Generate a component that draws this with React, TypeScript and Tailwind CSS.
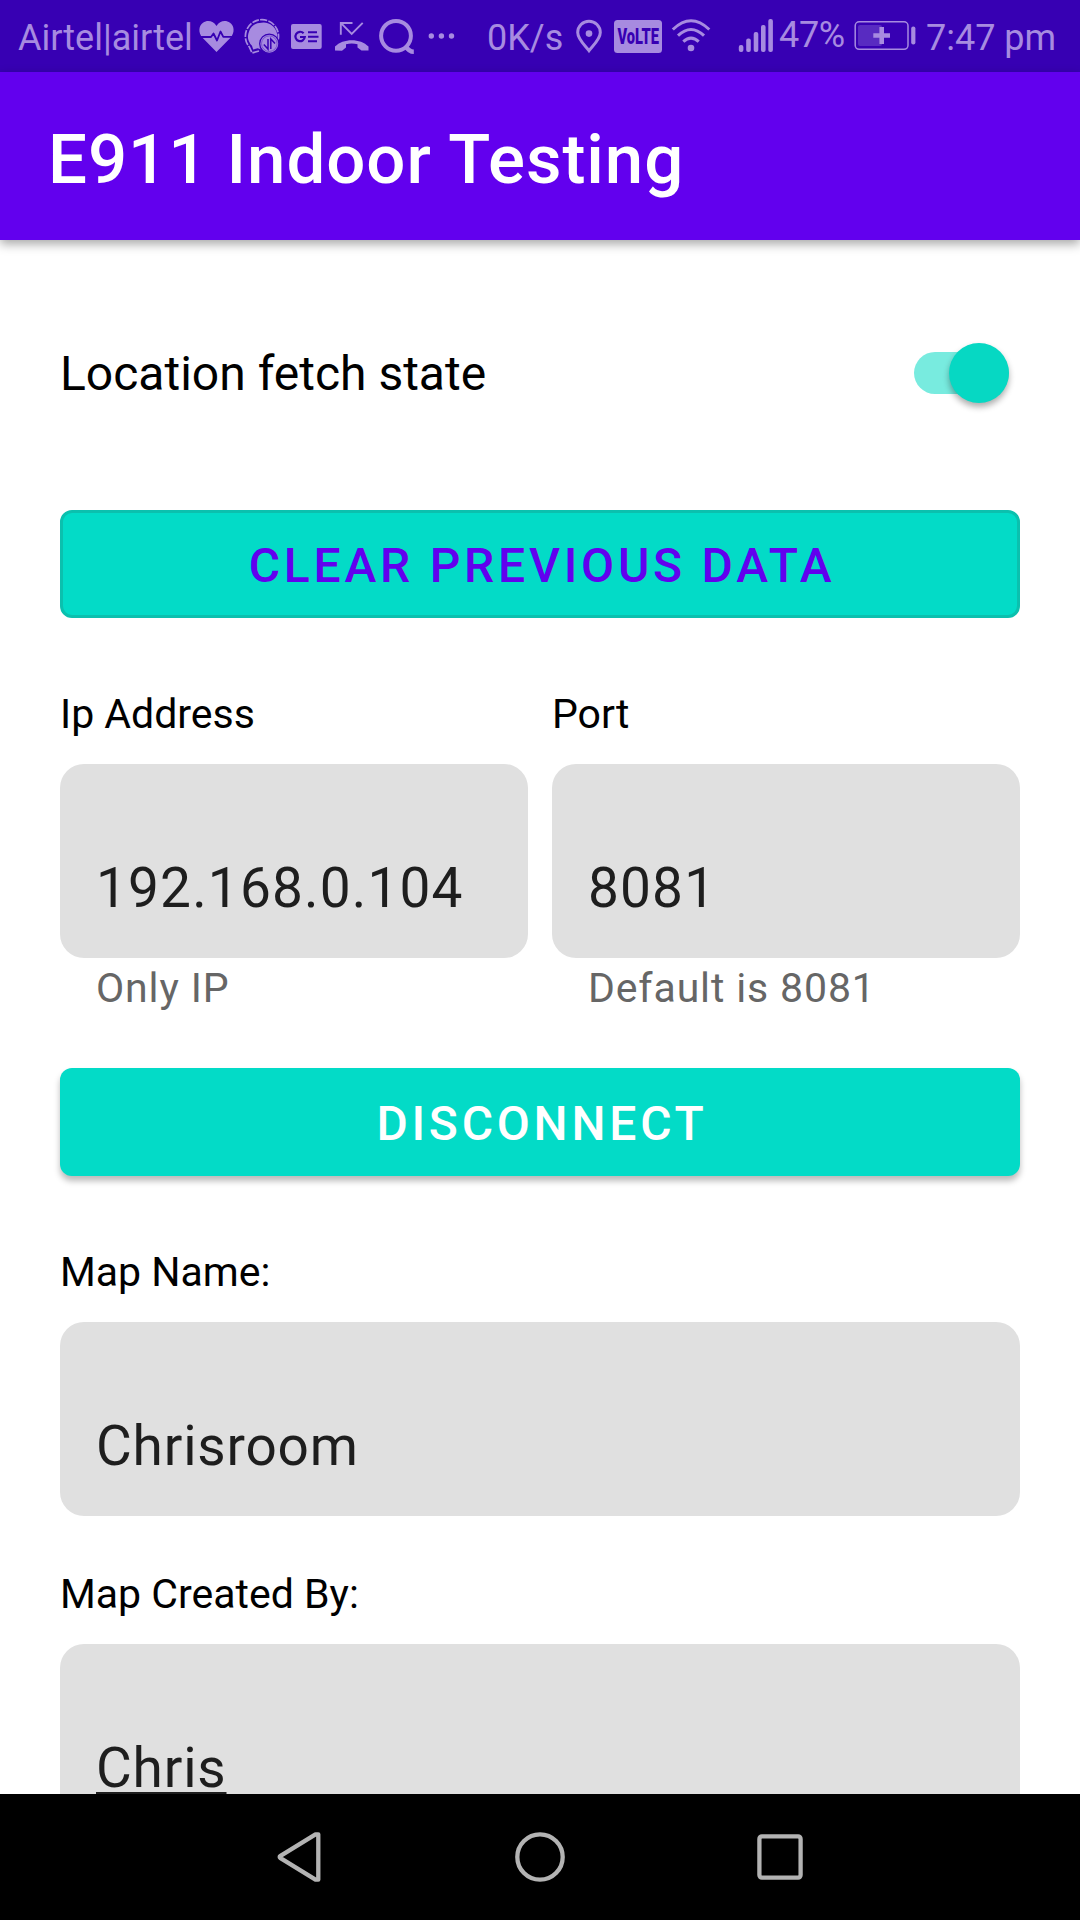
import React from "react";

const tint = "#a78be0";

function HeartIcon() {
  return (
    <svg viewBox="195 0 42 72" className="h-[72px] w-[42px] shrink-0">
      <path
        d="M216.5 52 L202.5 37.7 C197.8 32.5 198.8 25.5 203 22.7 C208 19.5 213.5 21.4 216.5 26 C219.500 21.400 225 19.500 230 22.700 C234.200 25.500 235.200 32.500 230.500 37.700 Z"
        fill={tint}
      />
      <path
        d="M199 37 H211 L213.500 33.500 L217 40.500 L220.500 31.500 L223.300 36.800 H234"
        fill="none"
        stroke="#3700b3"
        strokeWidth="1.8"
        strokeLinejoin="round"
      />
    </svg>
  );
}

function ChatIcon() {
  return (
    <svg viewBox="237 0 48 72" className="h-[72px] w-[48px] shrink-0" fill="none">
      <path
        d="M278 40.500 A16.600 16.600 0 1 0 249.300 47 L252 53 L259 51"
        stroke={tint}
        strokeWidth="1.7"
        strokeDasharray="7 1.300"
      />
      <path
        d="M261.500 22.800 a13.500 13.500 0 0 0 -9.500 23 l1.200 3.600 4.500 -1.200 a13.500 13.500 0 1 0 3.800 -25.400"
        fill={tint}
      />
      <circle cx="269.300" cy="43.700" r="9.600" fill={tint} stroke="#3700b3" strokeWidth="1.300" />
      <circle cx="269.300" cy="43.700" r="7.800" stroke="#5d30c2" strokeWidth="0.600" />
      <path d="M263.800 44.500 L268 49 V39 M270.800 49 V39 L275 43.500" stroke="#3700b3" strokeWidth="1.500" />
    </svg>
  );
}

function NewsIcon() {
  return (
    <svg viewBox="285 0 45 72" className="h-[72px] w-[45px] shrink-0">
      <rect x="291" y="24" width="30.700" height="25" rx="2" fill={tint} />
      <path
        d="M303.600 33.300 A4.700 4.700 0 1 0 304.800 37 H300"
        fill="none"
        stroke="#3700b3"
        strokeWidth="2.200"
      />
      <path d="M308 32.200 H317 M308 36.700 H318.500 M308 41.200 H317" stroke="#3700b3" strokeWidth="2" />
    </svg>
  );
}

function MissedCallIcon() {
  return (
    <svg viewBox="330 0 42 72" className="h-[72px] w-[42px] shrink-0">
      <path d="M352.500 23 H340.800 V34.700 M341 23.200 L351.700 34 L362.700 22.800" fill="none" stroke={tint} strokeWidth="1.900" />
      <path
        d="M335 50.500 V46.500 C343 38 360.500 38 368.500 46.500 V50.500 H361.500 L357.500 47.500 V44.300 C354 43.300 349.500 43.300 346 44.300 V47.500 L342 50.800 Z"
        fill={tint}
      />
    </svg>
  );
}

function SearchIcon() {
  return (
    <svg viewBox="372 0 48 72" className="h-[72px] w-[48px] shrink-0" fill="none" stroke={tint}>
      <circle cx="396" cy="35.800" r="14.900" strokeWidth="4" />
      <path d="M405.500 46 Q409 51.800 413.800 51.800" strokeWidth="4.500" />
    </svg>
  );
}

function DotsIcon() {
  return (
    <svg viewBox="420 0 66 72" className="h-[72px] w-[66px] shrink-0" fill={tint}>
      <circle cx="431.300" cy="36" r="2.700" />
      <circle cx="441.400" cy="36" r="2.700" />
      <circle cx="451.500" cy="36" r="2.700" />
    </svg>
  );
}

function PinIcon() {
  return (
    <svg viewBox="570 0 40 72" className="h-[72px] w-[40px] shrink-0">
      <path
        d="M589 50.700 C586 46.500 577.700 39.500 577.700 32.500 A11.300 11.300 0 0 1 600.300 32.500 C600.300 39.500 592 46.500 589 50.700 Z"
        fill="none"
        stroke={tint}
        strokeWidth="3"
      />
      <circle cx="589" cy="33.600" r="3.300" fill={tint} />
    </svg>
  );
}

function VolteIcon() {
  return (
    <svg viewBox="610 0 58 72" className="h-[72px] w-[58px] shrink-0">
      <rect x="614" y="20" width="48" height="33" rx="3.500" fill={tint} />
      <text
        x="617.500"
        y="44"
        textLength="41.500"
        lengthAdjust="spacingAndGlyphs"
        fontFamily="Roboto"
        fontWeight="900"
        fontSize="21.500"
        fill="#3700b3"
      >
        VoLTE
      </text>
    </svg>
  );
}

function WifiIcon() {
  return (
    <svg viewBox="668 0 64 72" className="h-[72px] w-[64px] shrink-0" fill="none" stroke={tint} strokeWidth="3">
      <path d="M672.800 29.500 Q691 12 709.300 29.500" />
      <path d="M678 35.700 Q691 23.300 704 35.700" />
      <path d="M683.300 41.700 Q691 34.500 698.700 41.700" />
      <circle cx="691" cy="48" r="3.300" fill={tint} stroke="none" />
    </svg>
  );
}

function SignalIcon() {
  return (
    <svg viewBox="732 0 46 72" className="h-[72px] w-[46px] shrink-0" fill={tint}>
      <rect x="738.800" y="45" width="4.600" height="7" rx="2" />
      <rect x="746.200" y="38.500" width="4.600" height="13.500" rx="2" />
      <rect x="753.700" y="32" width="4.600" height="20" rx="2" />
      <rect x="761" y="25" width="4.600" height="27" rx="2" />
      <rect x="768.300" y="19" width="4.600" height="33" rx="2" />
    </svg>
  );
}

function BatteryIcon() {
  return (
    <svg viewBox="848 0 76 72" className="h-[72px] w-[76px] shrink-0">
      <rect x="855.200" y="21.800" width="52.800" height="27.500" rx="4" fill="none" stroke={tint} strokeWidth="1.500" />
      <rect x="858" y="25" width="24" height="21" rx="2" fill="#582bc1" />
      <path d="M873.300 35.500 H890 M881.700 27 V44" stroke={tint} strokeWidth="4.600" />
      <rect x="911.200" y="26.500" width="4.200" height="18" rx="2" fill={tint} />
    </svg>
  );
}

function StatusBar() {
  return (
    <div className="flex h-[72px] shrink-0 items-center bg-[#3700b3] text-[36px] leading-[44px] whitespace-nowrap text-[#a78be0]">
      <span className="w-[195px] shrink-0 pt-[3px] pl-[18px]">Airtel|airtel</span>
      <HeartIcon />
      <ChatIcon />
      <NewsIcon />
      <MissedCallIcon />
      <SearchIcon />
      <DotsIcon />
      <span className="w-[84px] shrink-0 pt-[3px] pl-[1px]">0K/s</span>
      <PinIcon />
      <VolteIcon />
      <WifiIcon />
      <SignalIcon />
      <span className="w-[70px] shrink-0 pb-[3px] pl-[1px] tracking-[-0.3px]">47%</span>
      <BatteryIcon />
      <span className="pt-[3px] pl-[2px]">7:47 pm</span>
    </div>
  );
}

function Label({ children }: { children: React.ReactNode }) {
  return <div className="h-[48px] text-[41px] leading-[48px] text-black">{children}</div>;
}

function Field({ value, numeric, underlined }: { value: string; numeric?: boolean; underlined?: boolean }) {
  return (
    <div
      className={`mt-[26px] h-[194px] rounded-[24px] bg-[#e0e0e0] pt-[92px] pl-[36px] text-[55px] leading-[64px] text-[#1e1e1e] ${
        numeric ? "tracking-[1.15px]" : "tracking-[0.8px]"
      }`}
    >
      <span className={underlined ? "underline decoration-[3px] underline-offset-[5px] [text-decoration-skip-ink:none]" : ""}>
        {value}
      </span>
    </div>
  );
}

function Helper({ children }: { children: React.ReactNode }) {
  return (
    <div className="mt-[6px] h-[48px] pl-[36px] text-[41px] leading-[48px] tracking-[0.86px] text-[#666666]">
      {children}
    </div>
  );
}

function NavBar() {
  return (
    <div className="flex h-[126px] shrink-0 items-center justify-center gap-[180px] bg-black">
      <svg viewBox="-9 0 60 60" className="size-[60px]" fill="none" stroke="#b3b3b3" strokeWidth="4.3" strokeLinejoin="round">
        <path d="M39.300 7.300 V52.700 L36.500 52.700 L1.500 31.200 Q-0.200 30 1.500 28.800 L36.500 7.300 Z" />
      </svg>
      <svg viewBox="0 0 60 60" className="size-[60px]" fill="none" stroke="#b3b3b3" strokeWidth="4.3">
        <circle cx="30" cy="30" r="22.700" />
      </svg>
      <svg viewBox="0 0 60 60" className="size-[60px]" fill="none" stroke="#b3b3b3" strokeWidth="4.3">
        <rect x="9.400" y="9.400" width="41.200" height="41.200" rx="2.500" />
      </svg>
    </div>
  );
}

export default function App() {
  return (
    <div className="flex h-[1920px] w-[1080px] flex-col overflow-hidden bg-white font-[Roboto,sans-serif]">
      <StatusBar />
      <header className="z-10 flex h-[168px] shrink-0 items-center bg-[#6200ee] pt-[8px] pl-[48px] shadow-[0_4px_10px_rgba(0,0,0,0.35)]">
        <h1 className="text-[69px] leading-[80px] font-medium tracking-[0.95px] text-white">E911 Indoor Testing</h1>
      </header>

      <main className="min-h-0 flex-1 overflow-hidden px-[60px] pt-[102px]">
        <div className="flex h-[62px] items-center justify-between">
          <span className="pt-[2px] text-[48px] leading-[60px] text-black">Location fetch state</span>
          <div className="mr-[11px] flex h-[42px] w-[95px] items-center justify-end rounded-full bg-[#78ebdf]">
            <div className="mb-[1px] size-[60px] shrink-0 rounded-full bg-[#06d8c3] shadow-[0_4px_6px_rgba(0,0,0,0.32)]" />
          </div>
        </div>

        <button className="mt-[106px] flex h-[108px] w-full items-center justify-center rounded-[12px] border-[3px] border-[#0bc0ae] bg-[#03dbc7] pt-[3px] pl-[4px] text-[48px] leading-[56px] font-medium tracking-[3.77px] text-[#6200ee]">
          CLEAR PREVIOUS DATA
        </button>

        <div className="mt-[72px] grid grid-cols-2 gap-[24px]">
          <div>
            <Label>Ip Address</Label>
            <Field value="192.168.0.104" numeric />
            <Helper>Only IP</Helper>
          </div>
          <div>
            <Label>Port</Label>
            <Field value="8081" numeric />
            <Helper>Default is 8081</Helper>
          </div>
        </div>

        <button className="mt-[56px] flex h-[108px] w-full items-center justify-center rounded-[12px] bg-[#03dbc7] pt-[3px] pl-[4px] text-[48px] leading-[56px] font-medium tracking-[3.77px] text-white shadow-[0_5px_6px_rgba(0,0,0,0.27)]">
          DISCONNECT
        </button>

        <div className="mt-[72px]">
          <Label>Map Name:</Label>
          <Field value="Chrisroom" />
        </div>
        <div className="mt-[54px]">
          <Label>Map Created By:</Label>
          <Field value="Chris" underlined />
        </div>
      </main>

      <NavBar />
    </div>
  );
}
